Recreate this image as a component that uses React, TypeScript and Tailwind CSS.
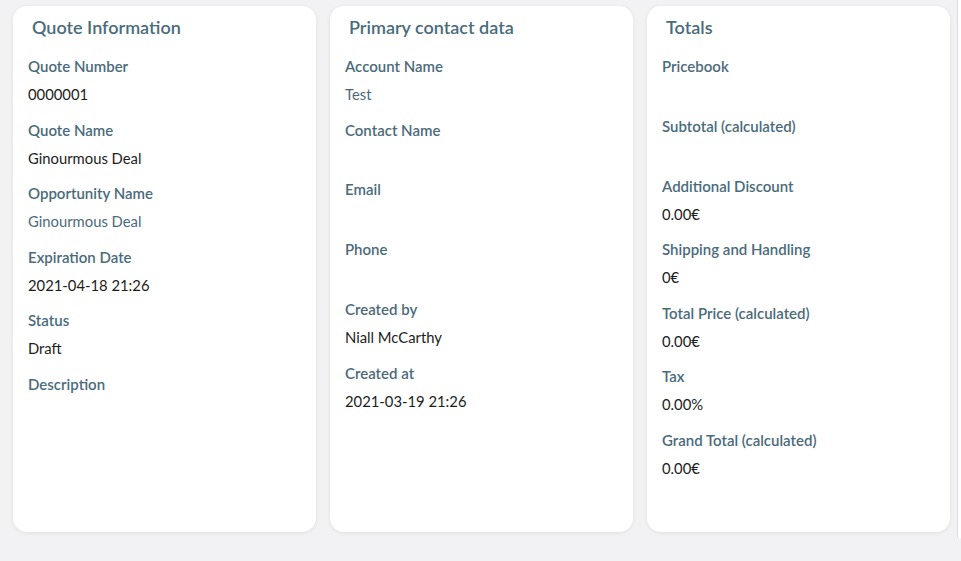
type Field = { label: string; value?: string; link?: boolean };

const quoteInfo: Field[] = [
  { label: "Quote Number", value: "0000001" },
  { label: "Quote Name", value: "Ginourmous Deal" },
  { label: "Opportunity Name", value: "Ginourmous Deal", link: true },
  { label: "Expiration Date", value: "2021-04-18 21:26" },
  { label: "Status", value: "Draft" },
  { label: "Description" },
];

const contactData: Field[] = [
  { label: "Account Name", value: "Test", link: true },
  { label: "Contact Name" },
  { label: "Email" },
  { label: "Phone" },
  { label: "Created by", value: "Niall McCarthy" },
  { label: "Created at", value: "2021-03-19 21:26" },
];

const totals: Field[] = [
  { label: "Pricebook" },
  { label: "Subtotal (calculated)" },
  { label: "Additional Discount", value: "0.00€" },
  { label: "Shipping and Handling", value: "0€" },
  { label: "Total Price (calculated)", value: "0.00€" },
  { label: "Tax", value: "0.00%" },
  { label: "Grand Total (calculated)", value: "0.00€" },
];

// ─── Info Card ─────────────────────────────────────────────────────────────────
function InfoCard({ title, fields }: { title: string; fields: Field[] }) {
  return (
    <div className="w-[303px] h-[526px] shrink-0 bg-white rounded-[14px] shadow-[0_1px_4px_rgba(0,0,0,0.08)] pt-[7px] px-[15px]">
      <h2 className="pl-[4px] h-7 leading-7 text-[18px] font-semibold text-[#4a6b7b]">
        {title}
      </h2>
      <div className="mt-[15px] flex flex-col">
        {fields.map((f) => (
          <div key={f.label} className="flex flex-col mb-[15.6px]">
            <span className="h-5 leading-5 text-[15px] font-semibold text-[#4a6b7b]">
              {f.label}
            </span>
            {f.value ? (
              <span
                className={`mt-2 h-5 leading-5 text-[14.8px] ${f.link ? "text-[#4a6b7b]" : "text-[#1c1c1c]"}`}
              >
                {f.value}
              </span>
            ) : (
              <span className="mt-2 h-[16.2px]" />
            )}
          </div>
        ))}
      </div>
    </div>
  );
}

export default function App() {
  return (
    <div
      className="w-full h-[561px] bg-[#f2f2f4] flex overflow-hidden"
      style={{ fontFamily: "Lato, 'Open Sans', sans-serif" }}
    >
      <div className="flex gap-[14px] pl-[13px] pt-[6px]">
        <InfoCard title="Quote Information" fields={quoteInfo} />
        <InfoCard title="Primary contact data" fields={contactData} />
        <InfoCard title="Totals" fields={totals} />
      </div>
      <div className="ml-[7px] w-[4px] h-[538px] border-l border-[#dcdcde] bg-white" />
    </div>
  );
}
